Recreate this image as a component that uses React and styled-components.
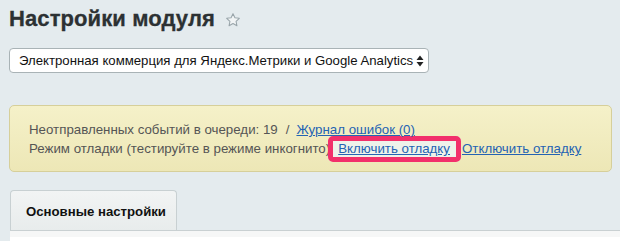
import React from "react";
import styled, { createGlobalStyle } from "styled-components";

const GlobalStyle = createGlobalStyle`
  html, body {
    margin: 0;
    padding: 0;
    background: #e4ebee;
    font-family: "Liberation Sans", Arial, sans-serif;
  }
`;

const Page = styled.div`
  width: 620px;
  height: 241px;
  overflow: hidden;
  padding: 0 0 0 9px;
  box-sizing: border-box;
`;

const TitleRow = styled.div`
  display: flex;
  align-items: center;
  height: 38px;
`;

const Title = styled.h1`
  margin: 0;
  font-size: 22px;
  font-weight: bold;
  color: #2c3133;
  letter-spacing: 0.1px;
  -webkit-text-stroke: 0.3px #2c3133;
`;

const Star = styled.svg`
  margin-left: 10px;
  margin-top: 1px;
`;

const Select = styled.div`
  margin-top: 10px;
  width: 420px;
  height: 25px;
  box-sizing: border-box;
  background: #fff;
  border: 1px solid #a9b3b6;
  border-radius: 4px;
  display: flex;
  align-items: center;
  justify-content: space-between;
  padding: 0 4px 0 9px;
  font-size: 13.2px;
  color: #111;
`;

const Notice = styled.div`
  margin-top: 32px;
  width: 603px;
  height: 67px;
  box-sizing: border-box;
  border: 1px solid #d6cf9a;
  border-radius: 5px;
  background: linear-gradient(#f5f1c9, #ede7b6);
  padding: 15px 0 0 19px;
  font-size: 13.3px;
  line-height: 18px;
  color: #555;
`;

const Line = styled.div`
  white-space: nowrap;
  position: relative;
  z-index: ${(p) => (p.$top ? 1 : 0)};
  margin-top: ${(p) => (p.$top ? 0 : 1)}px;
`;

const Link = styled.a`
  color: #2463b3;
  text-decoration: underline;
  cursor: pointer;
`;

const Sep = styled.span`
  margin: 0 7px 0 8px;
`;

const Highlight = styled.span`
  margin: 0 1px 0 -2px;
  padding: 0 6px 1px 5px;
  border: 5px solid #f2306b;
  border-radius: 5px;
  background: #eef2ea;
`;

const Tabs = styled.div`
  margin-top: 18px;
  margin-left: 1px;
  display: flex;
`;

const Tab = styled.div`
  width: 167px;
  height: 40px;
  box-sizing: border-box;
  border: 1px solid #c8d0d2;
  border-bottom: none;
  border-radius: 4px 4px 0 0;
  background: linear-gradient(#f2f4f4, #e8ecec);
  font-size: 13.2px;
  font-weight: bold;
  color: #111;
  display: flex;
  align-items: center;
  padding-left: 15px;
  padding-top: 2px;
`;

const Panel = styled.div`
  margin-left: 1px;
  height: 20px;
  border-top: 1px solid #c9d0d2;
  background: #fff;
  box-shadow: inset 0 6px 0 #f6f7f7;
`;

export default function App() {
  return (
    <>
      <GlobalStyle />
      <Page>
        <TitleRow>
          <Title>Настройки модуля</Title>
          <Star width="16" height="16" viewBox="0 0 24 24">
            <path
              d="M12 2.5l2.9 6.1 6.6.8-4.9 4.6 1.3 6.6L12 17.3l-5.9 3.3 1.3-6.6-4.9-4.6 6.6-.8z"
              fill="#f1f4f5"
              stroke="#9aa6ab"
              strokeWidth="1.6"
              strokeLinejoin="round"
            />
          </Star>
        </TitleRow>
        <Select>
          <span>Электронная коммерция для Яндекс.Метрики и Google Analytics</span>
          <svg width="8" height="12" viewBox="0 0 8 12">
            <path d="M4 0.5L7.5 5H0.5z M4 11.5L0.5 7H7.5z" fill="#222" />
          </svg>
        </Select>
        <Notice>
          <Line $top>
            Неотправленных событий в очереди: 19
            <Sep>/</Sep>
            <Link>Журнал ошибок (0)</Link>
          </Line>
          <Line>
            Режим отладки (тестируйте в режиме инкогнито)
            <Highlight>
              <Link>Включить отладку</Link>
            </Highlight>
            <Link>Отключить отладку</Link>
          </Line>
        </Notice>
        <Tabs>
          <Tab>Основные настройки</Tab>
        </Tabs>
        <Panel />
      </Page>
    </>
  );
}
